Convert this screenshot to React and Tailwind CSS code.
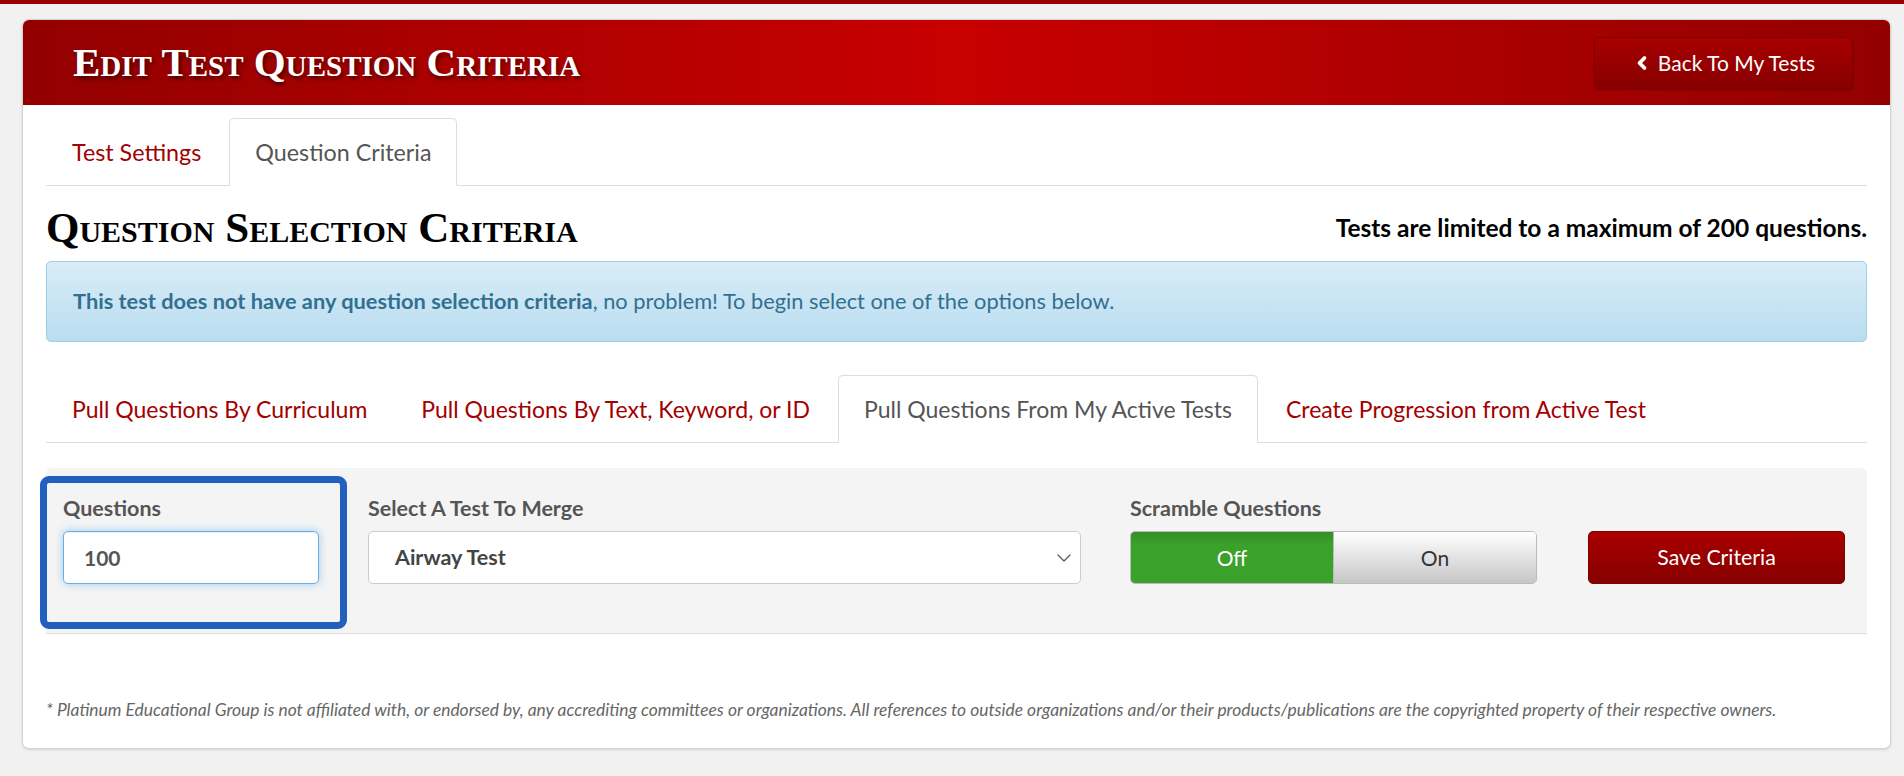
import { ChevronLeft, ChevronDown } from 'lucide-react';

const sans = { fontFamily: 'Lato, "Open Sans", sans-serif' };
const serif = { fontFamily: '"Liberation Serif", "DejaVu Serif", serif', fontVariant: 'small-caps' };

function TabBar({ tabs, active, size = 'text-[23.3px]' }) {
  return (
    <ul className="flex border-b border-[#dddddd]">
      {tabs.map((t) => (
        <li key={t} className="-mb-px mr-[2px]">
          {t === active ? (
            <span className={`block rounded-t-[5px] border border-[#dddddd] border-b-white bg-white px-[25px] py-[18px] leading-[30px] text-[#555555] ${size}`}>
              {t}
            </span>
          ) : (
            <a className={`block border border-transparent px-[25px] py-[18px] leading-[30px] text-[#a30000] ${size}`}>
              {t}
            </a>
          )}
        </li>
      ))}
    </ul>
  );
}

export default function App() {
  return (
    <div className="min-h-[776px] bg-[#f1f1f1] pb-[30px]" style={sans}>
      <div className="h-[4px] bg-[#9a0000]" />

      <div className="ml-[22px] mr-[13px] mt-[15px] overflow-hidden rounded-[7px] border border-[#d4d4d4] bg-white shadow-sm">
        <header className="flex h-[85px] items-center justify-between bg-[linear-gradient(to_right,#930000,#c80000_50%,#930000)] pl-[50px] pr-[37px]">
          <h1
            className="text-[41px] font-bold leading-none text-white [text-shadow:2px_3px_4px_rgba(0,0,0,0.55)]"
            style={serif}
          >
            Edit Test Question Criteria
          </h1>
          <button className="flex h-[52px] w-[259px] items-center justify-center gap-[6px] rounded-[5px] border border-[#7e0000] bg-[linear-gradient(to_bottom,#a80000,#880000)] text-[21px] text-white shadow-[0_1px_2px_rgba(0,0,0,0.25)]">
            <ChevronLeft className="h-[20px] w-[20px]" strokeWidth={4.5} />
            Back To My Tests
          </button>
        </header>

        <div className="px-[23px] pb-[27px]">
          <div className="mt-[13px]">
            <TabBar tabs={['Test Settings', 'Question Criteria']} active="Question Criteria" />
          </div>

          <div className="flex items-center justify-between pb-[9px] pt-[18px]">
            <h2 className="text-[43px] font-bold leading-[48px] text-black" style={serif}>
              Question Selection Criteria
            </h2>
            <p className="text-[24.5px] font-bold text-black">Tests are limited to a maximum of 200 questions.</p>
          </div>

          <div className="flex h-[81px] items-center rounded-[5px] border border-[#9ccfe8] bg-[linear-gradient(to_bottom,#d9ecf7,#b9ddf0)] px-[26px] text-[21.8px] text-[#31708f]">
            <p>
              <span className="font-bold">This test does not have any question selection criteria</span>, no problem! To
              begin select one of the options below.
            </p>
          </div>

          <div className="mt-[33px]">
            <TabBar
              size="text-[23px]"
              tabs={[
                'Pull Questions By Curriculum',
                'Pull Questions By Text, Keyword, or ID',
                'Pull Questions From My Active Tests',
                'Create Progression from Active Test',
              ]}
              active="Pull Questions From My Active Tests"
            />
          </div>

          <div className="mt-[25px] flex h-[166px] items-start rounded-t-[6px] border-b border-[#dddddd] bg-[#f4f4f4] pt-[15px]">
            <div className="ml-px h-[139px] w-[293px] rounded-[2px] pl-[16px] pt-[13px] outline outline-[7px] outline-[#2160bd]">
              <label className="block text-[21.5px] font-bold leading-[24px] text-[#555555]">Questions</label>
              <input
                readOnly
                value="100"
                className="mt-[11px] h-[53px] w-[256px] rounded-[5px] border border-[#66afe9] bg-white px-[20px] text-[21px] font-bold text-[#555555] shadow-[inset_0_1px_1px_rgba(0,0,0,0.075),0_0_8px_rgba(102,175,233,0.6)] outline-none"
              />
            </div>

            <div className="ml-[28px] w-[713px] pt-[13px]">
              <label className="block text-[21.5px] font-bold leading-[24px] text-[#555555]">Select A Test To Merge</label>
              <div className="mt-[11px] flex h-[53px] items-center justify-between rounded-[5px] border border-[#cccccc] bg-white pl-[26px] pr-[4px]">
                <span className="text-[21.5px] font-bold text-[#444444]">Airway Test</span>
                <ChevronDown className="h-[24px] w-[24px] text-[#555555]" strokeWidth={1.2} />
              </div>
            </div>

            <div className="ml-[49px] w-[407px] pt-[13px]">
              <label className="block text-[21.5px] font-bold leading-[24px] text-[#555555]">Scramble Questions</label>
              <div className="mt-[11px] flex h-[53px] overflow-hidden rounded-[5px] border border-[#bbbbbb]">
                <span className="flex flex-1 items-center justify-center bg-[linear-gradient(to_bottom,#358f26,#3aa12a_25%,#3aa12a)] text-[21px] text-white">
                  Off
                </span>
                <span className="flex flex-1 items-center justify-center border-l border-[#bbbbbb] bg-[linear-gradient(to_bottom,#ffffff,#c6c6c6)] text-[21px] text-[#333333]">
                  On
                </span>
              </div>
            </div>

            <div className="ml-[51px] pt-[48px]">
              <button className="h-[53px] w-[257px] rounded-[5px] border border-[#7e0000] bg-[linear-gradient(to_bottom,#aa0000,#850000)] text-[21.3px] text-white">
                Save Criteria
              </button>
            </div>
          </div>

          <p className="mt-[65px] text-[17.4px] italic leading-[22px] text-[#666666]">
            * Platinum Educational Group is not affiliated with, or endorsed by, any accrediting committees or
            organizations. All references to outside organizations and/or their products/publications are the
            copyrighted property of their respective owners.
          </p>
        </div>
      </div>
    </div>
  );
}
